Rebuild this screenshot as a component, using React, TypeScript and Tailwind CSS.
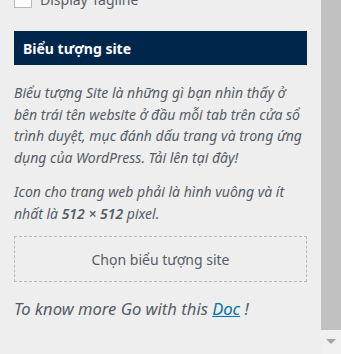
import React from "react";

export default function App() {
  return (
    <div className="w-[341px] h-[354px] overflow-hidden flex bg-[#eeeeee]" style={{ fontFamily: '"Noto Sans", "Open Sans", sans-serif' }}>
      <div className="flex-1 relative">
        <div className="absolute left-[14px] top-[-11px] flex items-center gap-[8px]">
          <div className="w-[18px] h-[17px] bg-white border border-[#b4b9be]" />
          <span className="text-[14px] text-[#555d66]">Display Tagline</span>
        </div>
        <div className="pt-[31px] px-[14px]">
          <div className="h-[34px] bg-[#00264c] flex items-center px-[9px] text-white font-bold text-[14px]">
            Biểu tượng site
          </div>
          <p className="mt-[17px] italic text-[14px] leading-[21.5px] text-[#555d66]">
            Biểu tượng Site là những gì bạn nhìn thấy ở<br />
            bên trái tên website ở đầu mỗi tab trên cửa sổ<br />
            trình duyệt, mục đánh dấu trang và trong ứng<br />
            dụng của WordPress. Tải lên tại đây!
          </p>
          <p className="mt-[13px] italic text-[14px] leading-[21.5px] text-[#555d66]">
            Icon cho trang web phải là hình vuông và ít<br />
            nhất là <span className="font-semibold">512 × 512</span> pixel.
          </p>
          <div className="mt-[12px] h-[46px] border border-dashed border-[#b4b9be] flex items-center justify-center text-[14px] text-[#555d66]">
            Chọn biểu tượng site
          </div>
          <p className="mt-[16px] italic text-[16.6px] leading-[22px] text-[#555d66]">
            To know more Go with this <span className="text-[#0073aa] underline">Doc</span> !
          </p>
        </div>
      </div>
      <div className="w-[20px] h-full flex flex-col">
        <div className="h-[330px] bg-[#c1c1c1]" />
        <div className="flex-1 bg-[#f0f0f0] flex items-center justify-center">
          <svg width="10" height="6" viewBox="0 0 10 6"><polygon points="0,0 10,0 5,5" fill="#a3a3a3" /></svg>
        </div>
      </div>
    </div>
  );
}
